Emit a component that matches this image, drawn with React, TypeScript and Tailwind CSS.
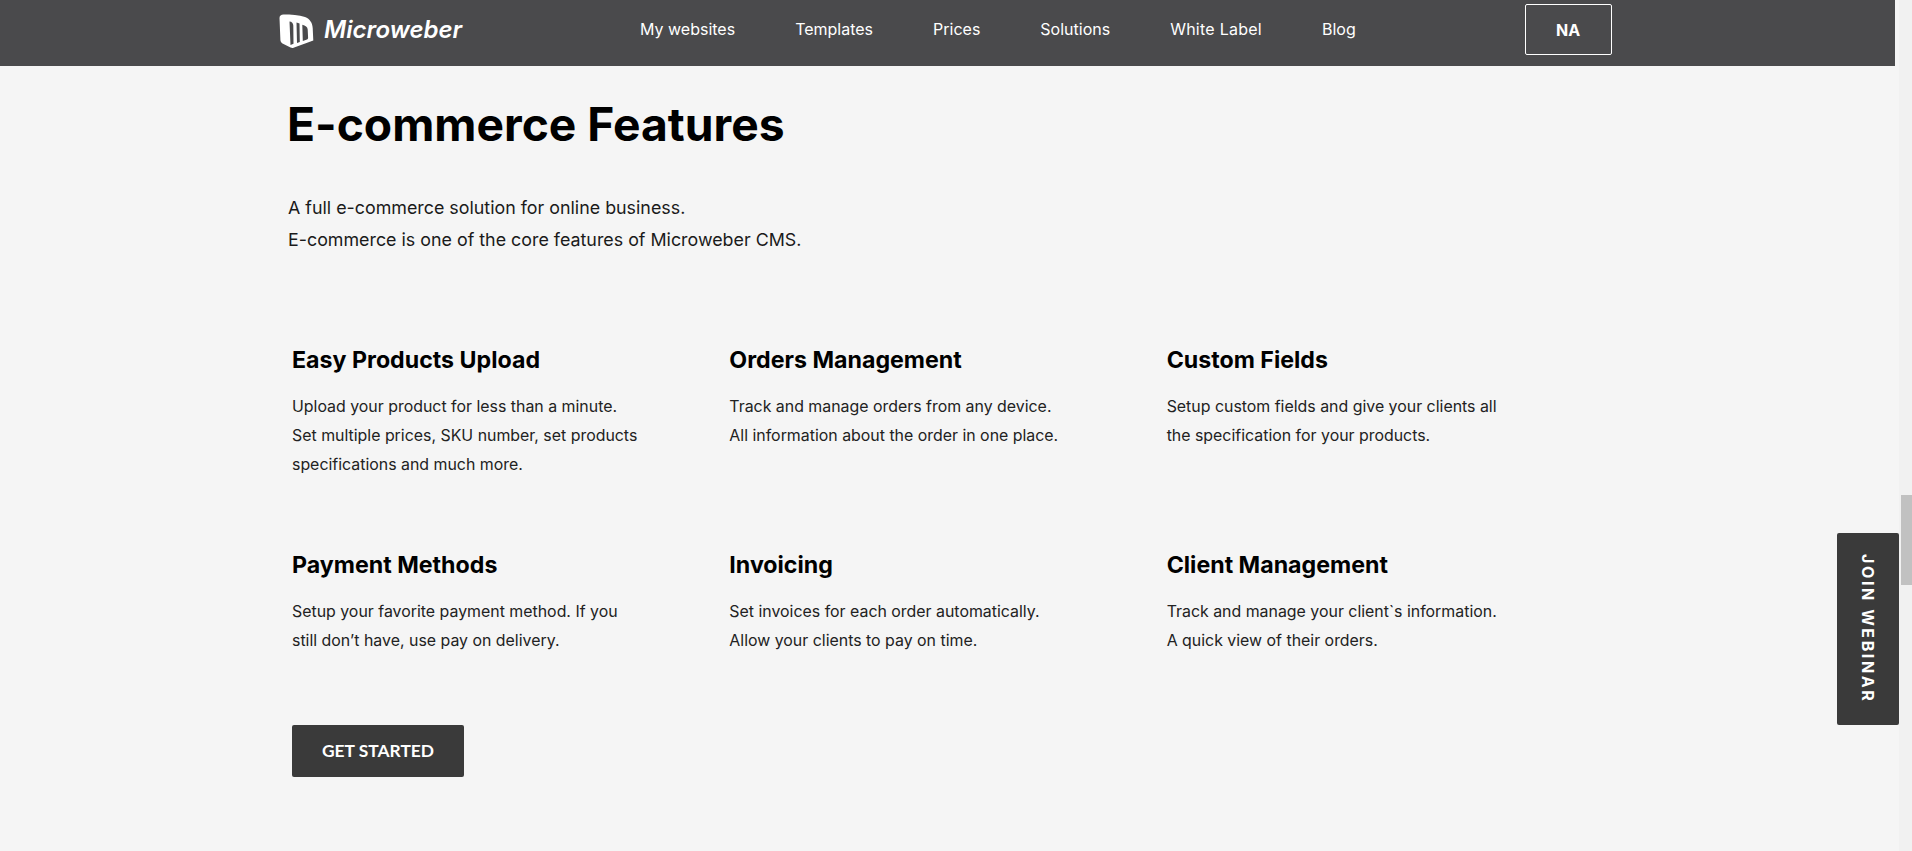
const items = [
  { title: 'Easy Products Upload', lines: ['Upload your product for less than a minute.', 'Set multiple prices, SKU number, set products', 'specifications and much more.'] },
  { title: 'Orders Management', lines: ['Track and manage orders from any device.', 'All information about the order in one place.'] },
  { title: 'Custom Fields', lines: ['Setup custom fields and give your clients all', 'the specification for your products.'] },
  { title: 'Payment Methods', lines: ['Setup your favorite payment method. If you', 'still don’t have, use pay on delivery.'] },
  { title: 'Invoicing', lines: ['Set invoices for each order automatically.', 'Allow your clients to pay on time.'] },
  { title: 'Client Management', lines: ['Track and manage your client`s information.', 'A quick view of their orders.'] },
];

const nav = ['My websites', 'Templates', 'Prices', 'Solutions', 'White Label', 'Blog'];

const Logo = () => (
  <svg className="mt-[3px]" width="35" height="35" viewBox="0 0 35 35" fill="none">
    <path
      fill="#fff"
      fillRule="evenodd"
      d="M0.5 4C0.5 1.8 2 0.5 4.5 0.5C12 0.5 20 0.8 26 3C31 5 33.5 9 33.7 14L34.3 26.5L14.5 33.8C13.5 34.2 12.5 34 11.5 33.5L3.5 29.5C2.2 28.8 1.5 27.5 1.4 26ZM10.5 7.5L11.5 31L14.5 29.8L14.3 11.5C14.2 9.2 12.8 7.6 10.5 7.5ZM17.5 8.5L18 29L20.8 28L20.5 9.5C19.6 9 18.6 8.7 17.5 8.5ZM23.3 10.8L23.8 27L28 25.5C28.8 25.1 29.1 24.6 29.1 23.8L28.7 15.5C28.6 13.2 26.4 11.5 23.3 10.8Z"
    />
  </svg>
);

export default function App() {
  return (
    <div className="flex h-[851px] overflow-hidden bg-[#f1f1f1] font-['Inter',sans-serif]">
      <div className="relative w-[1899px] shrink-0 bg-[#f5f5f5]">
        <header className="flex h-[66px] w-[1895px] items-center bg-[#4a4a4c] pb-[7px] pl-[279px] text-white">
          <Logo />
          <span className="ml-[10px] mt-[1px] w-[137px] whitespace-nowrap text-[24px] font-semibold italic">Microweber</span>
          <nav className="-mt-px ml-[179px] flex gap-[60px] text-[16px]">
            {nav.map((n) => (
              <a key={n} href="#" className={n === 'White Label' ? 'tracking-[0.25px]' : ''}>{n}</a>
            ))}
          </nav>
          <button className="ml-[169px] flex h-[51px] w-[87px] items-center justify-center rounded-[2px] border border-white text-[16px] font-bold">NA</button>
        </header>

        <main className="pl-[288px] pt-[30px] text-black">
          <h1 className="-ml-px text-[46.2px] font-bold leading-[56px]">E-commerce Features</h1>
          <div className="mt-[40px] text-[17.85px] leading-[32px] text-[#1a1a1a]">
            <p>A full e-commerce solution for online business.</p>
            <p>E-commerce is one of the core features of Microweber CMS.</p>
          </div>

          <div className="mt-[88px] grid w-[1316px] grid-cols-3 gap-y-[52px] pl-[4px]">
            {items.map((item) => (
              <div key={item.title} className="h-[153px]">
                <h3 className="text-[23.2px] font-bold leading-[32px]">{item.title}</h3>
                <div className="mt-[16px] text-[15.9px] leading-[29px] text-[#222]">
                  {item.lines.map((l) => (
                    <p key={l}>{l}</p>
                  ))}
                </div>
              </div>
            ))}
          </div>

          <button className="ml-[4px] mt-[23px] h-[52px] w-[172px] rounded-[2px] bg-[#3a3a3a] font-['Lato',sans-serif] text-[17.4px] font-bold text-white">GET STARTED</button>
        </main>

        <a href="#" className="absolute left-[1837px] top-[533px] flex h-[192px] w-[62px] items-center justify-center rounded-[2px] bg-[#3a3a3a] text-[16px] font-bold tracking-[2.6px] text-white [writing-mode:vertical-rl]">JOIN WEBINAR</a>
      </div>
      <div className="flex-1 pl-[2px] pt-[495px]">
        <div className="h-[90px] w-[11px] bg-[#c1c1c1]" />
      </div>
    </div>
  );
}
